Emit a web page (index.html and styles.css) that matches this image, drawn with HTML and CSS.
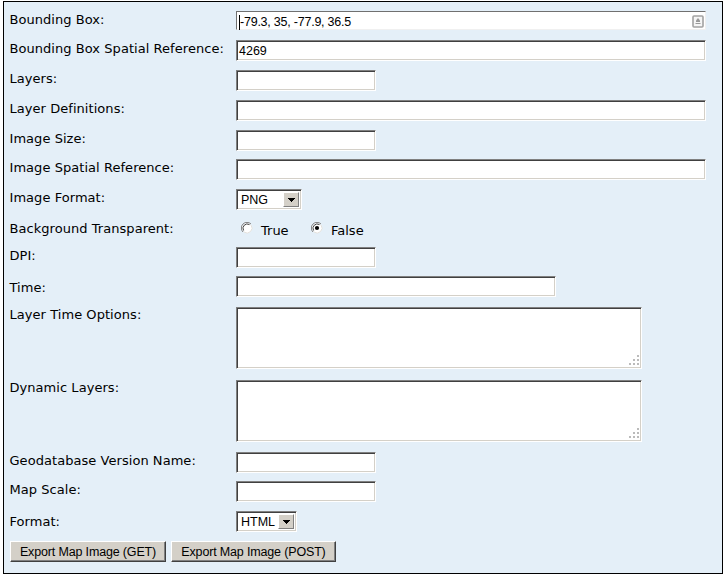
FILE: index.html
```
<!DOCTYPE html>
<html lang="en">
<head>
<meta charset="utf-8">
<title>Export Map</title>
<link rel="stylesheet" href="styles.css">
</head>
<body>
<form class="panel">
  <div class="row r29"><label>Bounding Box:</label><div class="field wide active"><span class="caret">-79.3, 35, -77.9, 36.5</span>
    <svg class="fill" width="12" height="13" viewBox="0 0 12 13"><rect x="1" y="1" width="10" height="11" rx="1" fill="#f5f5f5" stroke="#a2a2a2" stroke-width="1.6"/><path d="M6 3 8 5.5V7H4V5.5z" fill="#999"/><path d="M3.5 8.5h5" stroke="#999"/></svg></div></div>
  <div class="row r30"><label>Bounding Box Spatial Reference:</label><div class="field wide">4269</div></div>
  <div class="row r30"><label>Layers:</label><div class="field"></div></div>
  <div class="row r30"><label>Layer Definitions:</label><div class="field wide"></div></div>
  <div class="row r29"><label>Image Size:</label><div class="field"></div></div>
  <div class="row r30"><label>Image Spatial Reference:</label><div class="field wide"></div></div>
  <div class="row r30"><label>Image Format:</label><div class="select png"><span>PNG</span><i><svg width="7" height="4" viewBox="0 0 7 4" shape-rendering="crispEdges"><path d="M0 0h7v1H6v1H5v1H4v1H3V3H2V2H1V1H0z"/></svg></i></div></div>
  <div class="row r28 radios"><label>Background Transparent:</label>
    <div class="options">
      <svg width="12" height="12" viewBox="0 0 12 12"><circle cx="6" cy="6" r="5" fill="#fff"/><path d="M2 10A5.5 5.5 0 0 1 10 2" fill="none" stroke="#808080"/><path d="M2.6 8.5A4.3 4.3 0 0 1 8.5 2.6" fill="none" stroke="#404040"/><path d="M10 3A5 5 0 0 1 3 10" fill="none" stroke="#e4e1dc"/></svg><span class="true">True</span>
      <svg width="12" height="12" viewBox="0 0 12 12"><circle cx="6" cy="6" r="5" fill="#fff"/><path d="M2 10A5.5 5.5 0 0 1 10 2" fill="none" stroke="#808080"/><path d="M2.6 8.5A4.3 4.3 0 0 1 8.5 2.6" fill="none" stroke="#404040"/><path d="M10 3A5 5 0 0 1 3 10" fill="none" stroke="#e4e1dc"/><circle cx="6" cy="6" r="2.1"/></svg><span>False</span>
    </div></div>
  <div class="row r29"><label>DPI:</label><div class="field"></div></div>
  <div class="row r31 low"><label>Time:</label><div class="field medium"></div></div>
  <div class="row r73 high"><label>Layer Time Options:</label><div class="field area"><svg class="grip" width="12" height="12" viewBox="0 0 12 12" shape-rendering="crispEdges" fill="#bbb"><path d="M9 0h2v2H9zM5 4h2v2H5zM9 4h2v2H9zM1 8h2v2H1zM5 8h2v2H5zM9 8h2v2H9z"/></svg></div></div>
  <div class="row r72 high"><label>Dynamic Layers:</label><div class="field area"><svg class="grip" width="12" height="12" viewBox="0 0 12 12" shape-rendering="crispEdges" fill="#bbb"><path d="M9 0h2v2H9zM5 4h2v2H5zM9 4h2v2H9zM1 8h2v2H1zM5 8h2v2H5zM9 8h2v2H9z"/></svg></div></div>
  <div class="row r29"><label>Geodatabase Version Name:</label><div class="field"></div></div>
  <div class="row r30"><label>Map Scale:</label><div class="field"></div></div>
  <div class="row r30 format"><label>Format:</label><div class="select html"><span>HTML</span><i><svg width="7" height="4" viewBox="0 0 7 4" shape-rendering="crispEdges"><path d="M0 0h7v1H6v1H5v1H4v1H3V3H2V2H1V1H0z"/></svg></i></div></div>
  <div class="buttons"><button type="button" class="get">Export Map Image (GET)</button><button type="button" class="post">Export Map Image (POST)</button></div>
</form>
</body>
</html>
```
FILE: styles.css
```
* { box-sizing: border-box; }
body { margin: 0; background: #fff; font: 13px/16px "DejaVu Sans", Verdana, sans-serif; color: #000; overflow: hidden; }
.panel { margin: 1px 0 0 3px; width: 720px; height: 573px; border: 1px solid #000; background: #e4eff8; padding: 9px 0 0 6px; }
.row { display: grid; grid-template-columns: 226px 1fr; align-items: start; }
.r28 { height: 28px; }
.r29 { height: 29px; }
.r30 { height: 30px; }
.r31 { height: 31px; }
.r72 { height: 72px; }
.r73 { height: 73px; }
label { white-space: nowrap; padding-top: 1px; letter-spacing: 0.05px; margin-left: -0.5px; }
.low label { padding-top: 4px; }
.high label { padding-top: 0; }
.format label { padding-top: 3px; }
.radios label { padding-top: 2px; }
.field, .select {
  border: 1px solid; border-color: #808080 #fff #fff #808080;
  box-shadow: inset 1px 1px #404040, inset -1px -1px #d4d0c8;
  background: #fff; height: 21px; width: 140px;
  font: 12.5px/21px "Liberation Sans", Arial, sans-serif; padding-left: 2px; white-space: nowrap;
}
.wide { width: 470px; }
.medium { width: 320px; }
.area { width: 406px; height: 62px; display: flex; align-items: flex-end; justify-content: flex-end; padding: 1px; }
.active { display: flex; justify-content: space-between; align-items: center; height: 19px; box-shadow: none; border-color: #707070 #f0f0f0 #f0f0f0 #707070; padding-right: 1px; }
.caret { border-left: 1px solid #000; line-height: 15px; margin-top: 3px; letter-spacing: -0.23px; }
.fill { margin-top: 2px; }
.select { display: flex; justify-content: space-between; padding: 2px; }
.select span { padding-left: 2px; line-height: 16px; }
.select i { width: 16px; height: 15px; background: #d4d0c8; border: 1px solid; border-color: #fff #808080 #808080 #fff; display: flex; align-items: center; justify-content: center; }
.png { width: 66px; }
.html { width: 61px; }
.options { display: flex; align-items: flex-start; padding: 3px 0 0 5px; }
.options span { padding: 1px 0 0 8px; }
.options .true { width: 58px; }
.buttons { display: flex; gap: 5px; }
button { height: 21px; padding: 0; background: #d4d0c8; color: #000; border: 1px solid; border-color: #fff #404040 #404040 #fff; box-shadow: inset -1px -1px #808080; border-radius: 0; font: 12.5px/21px "Liberation Sans", Arial, sans-serif; letter-spacing: -0.16px; }
.get { width: 156px; }
.post { width: 165px; }
```
